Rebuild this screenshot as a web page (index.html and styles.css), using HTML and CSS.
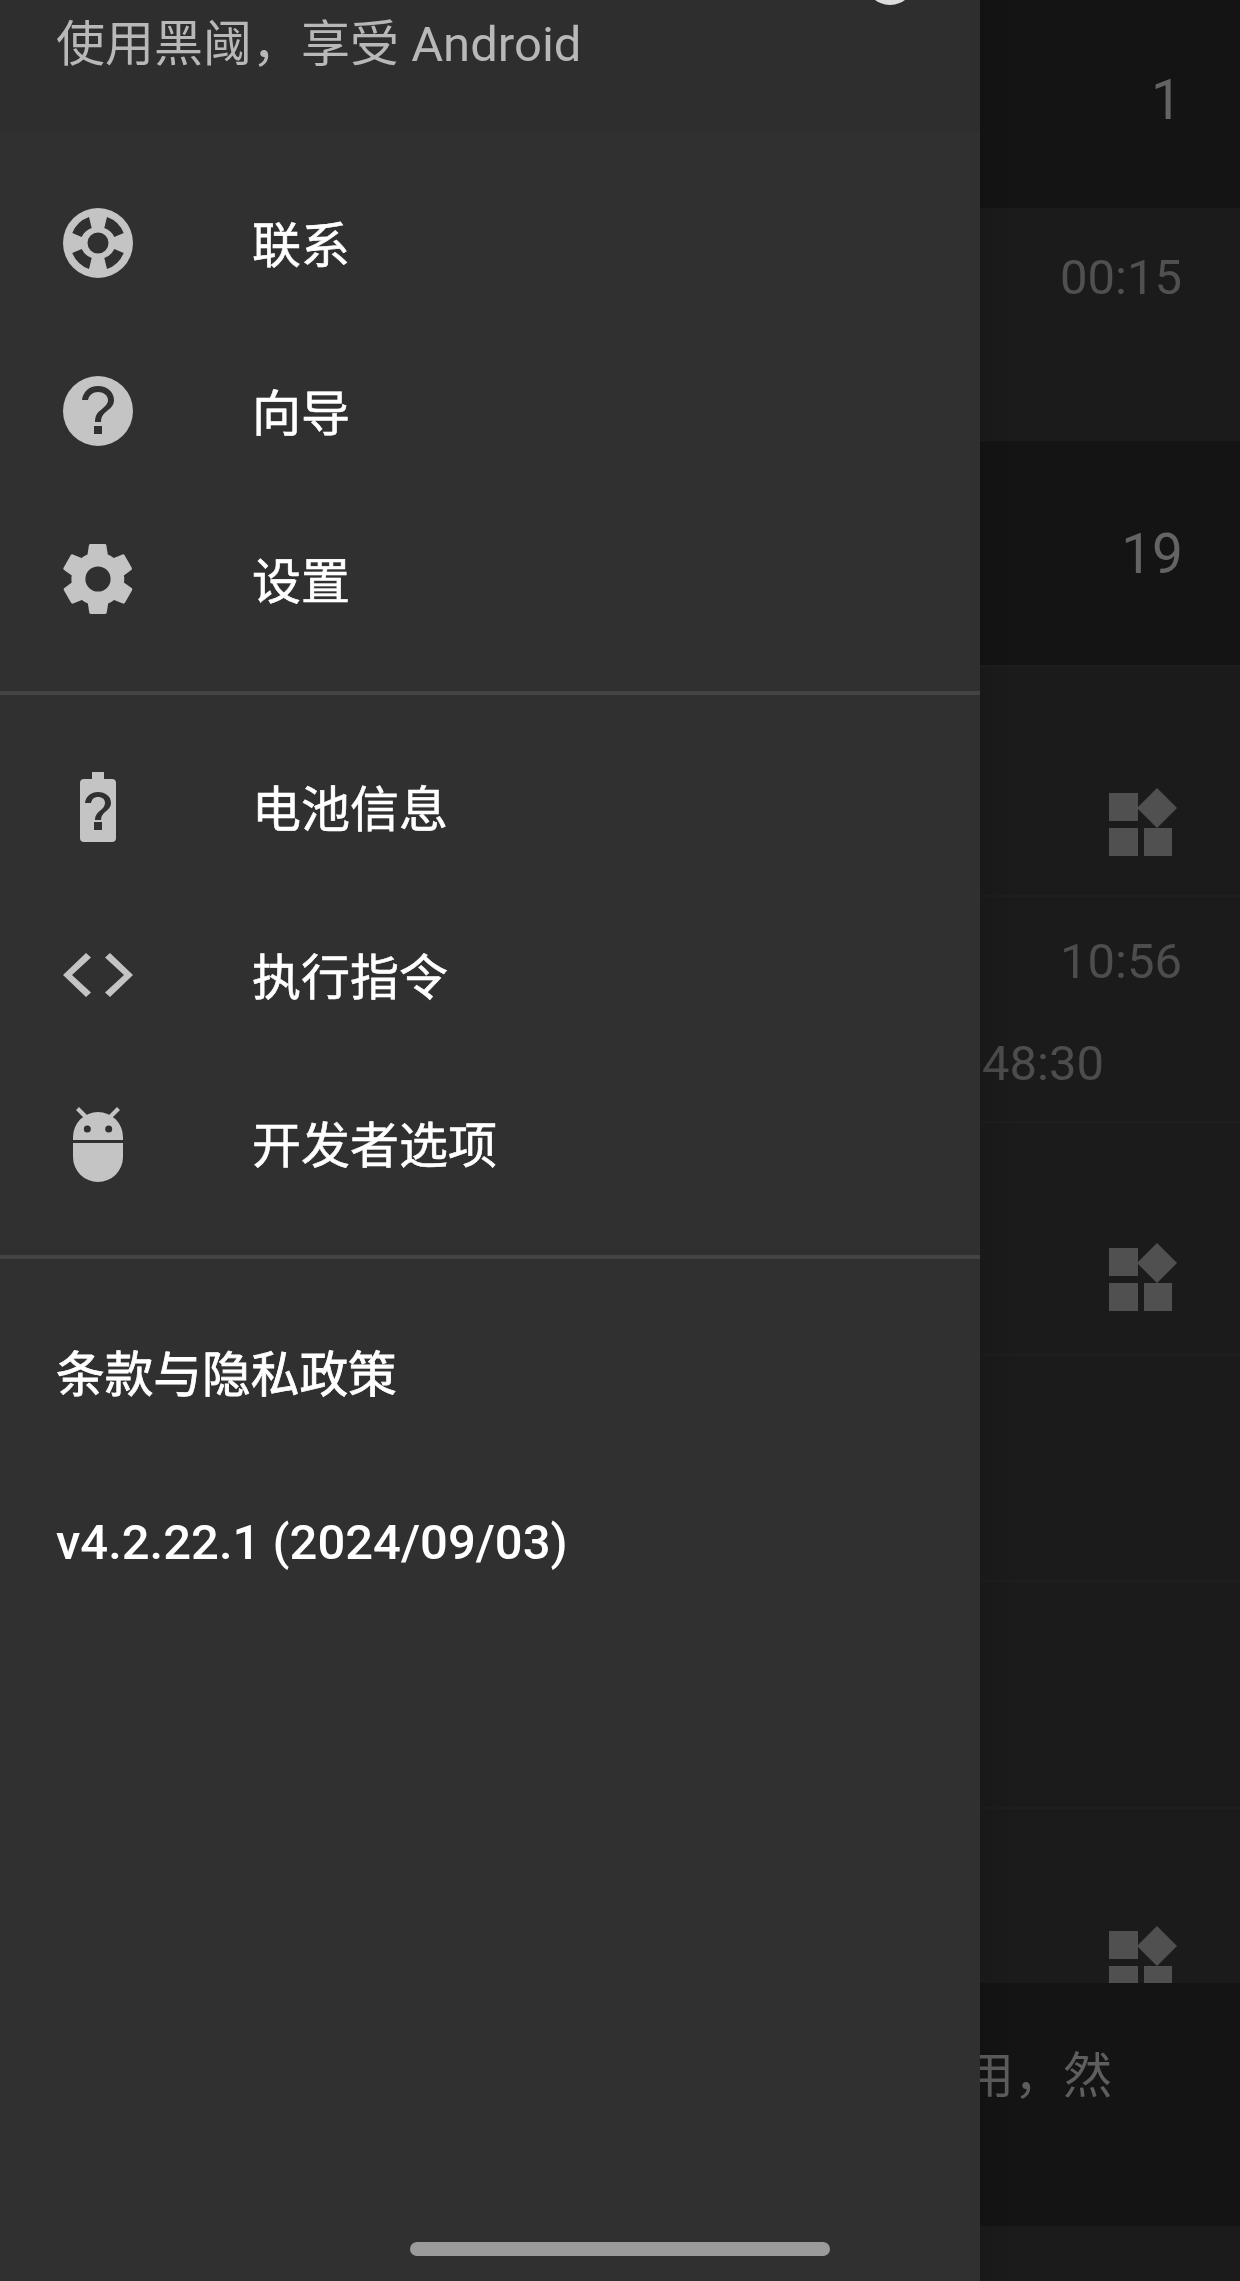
FILE: index.html
```html
<!DOCTYPE html>
<html lang="zh-CN">
<head>
<meta charset="utf-8">
<title>黑阈</title>
<link rel="stylesheet" href="styles.css">
</head>
<body>
<main class="list">
  <section class="row dark h208"><span class="value big offset-a">1</span></section>
  <section class="row h233"><span class="value offset-b">00:15</span></section>
  <section class="row dark h224"><span class="value big offset-c">19</span></section>
  <section class="row h230 line">
    <svg class="widgets w-a" viewBox="0 0 64 64"><path d="M0 0h29v28H0zM0 35h29v28H0zM35 35h28v28H35zM48 -5l20 20-20 20-20-20z"/></svg>
  </section>
  <section class="row h226 line stack">
    <span class="value">10:56</span>
    <span class="value shifted">48:30</span>
  </section>
  <section class="row h233 line">
    <svg class="widgets w-b" viewBox="0 0 64 64"><path d="M0 0h29v28H0zM0 35h29v28H0zM35 35h28v28H35zM48 -5l20 20-20 20-20-20z"/></svg>
  </section>
  <section class="row h226 line"></section>
  <section class="row h227 line"></section>
  <section class="row h176 clip">
    <svg class="widgets" viewBox="0 0 64 64"><path d="M0 0h29v28H0zM0 35h29v28H0zM35 35h28v28H35zM48 -5l20 20-20 20-20-20z"/></svg>
  </section>
  <section class="row dark h243 notice"><span class="notice-text">用，然</span></section>
  <section class="row h56"></section>
</main>

<aside class="drawer">
  <div class="avatar-edge"></div>
  <header class="drawer-head">使用黑阈，享受 Android</header>
  <nav class="group first">
    <a class="item">
      <svg class="icon" viewBox="0 0 70 70"><path fill-rule="evenodd" d="M35 0a35 35 0 1 1 0 70a35 35 0 1 1 0-70zM35 24.500a10.500 10.500 0 1 0 0 21a10.500 10.500 0 1 0 0-21zM26 9A28 28 0 0 0 9.300 25L18.700 29A17 17 0 0 1 28.700 20zM44 9A28 28 0 0 1 60.700 25L51.300 29A17 17 0 0 0 41.300 20zM26 61A28 28 0 0 1 9.300 45L18.700 41A17 17 0 0 0 28.700 50zM44 61A28 28 0 0 0 60.700 45L51.300 41A17 17 0 0 1 41.300 50z"/></svg>
      <span>联系</span>
    </a>
    <a class="item">
      <svg class="icon" viewBox="0 0 70 70"><path fill-rule="evenodd" d="M35 0a35 35 0 1 1 0 70a35 35 0 1 1 0-70zM31 50v8h8v-8zM35 10c-9 0-15 6-16 14h6c1-5 5-8 10-8s10 3 10 8c0 4-3 6-6 9-4 3-7 6-7 13h6c0-5 2-8 6-11 4-3 7-6 7-11 0-8-7-14-16-14z"/></svg>
      <span>向导</span>
    </a>
    <a class="item">
      <svg class="icon" viewBox="2 2 20 20"><path fill-rule="evenodd" d="M19.400 13c.1-.3.1-.7.1-1s0-.7-.1-1l2.100-1.600c.2-.2.3-.4.1-.7l-2-3.500c-.1-.2-.4-.3-.6-.2l-2.500 1c-.5-.4-1.100-.7-1.700-1l-.4-2.600c0-.2-.2-.4-.5-.4h-4c-.3 0-.5.2-.5.400l-.4 2.600c-.6.3-1.200.6-1.700 1l-2.500-1c-.2-.1-.5 0-.6.2l-2 3.500c-.2.3-.1.5.1.7L4.500 11c-.1.3-.1.7-.1 1s0 .7.1 1l-2.100 1.600c-.2.2-.3.4-.1.7l2 3.500c.1.2.4.3.6.2l2.500-1c.5.4 1.100.7 1.700 1l.4 2.600c0 .2.2.4.5.4h4c.3 0 .5-.2.5-.4l.4-2.600c.6-.3 1.200-.6 1.700-1l2.500 1c.2.1.5 0 .6-.2l2-3.500c.2-.3.1-.5-.1-.7zM12 8.400a3.600 3.600 0 1 1 0 7.200a3.600 3.600 0 1 1 0-7.200z"/></svg>
      <span>设置</span>
    </a>
  </nav>
  <hr class="rule">
  <nav class="group">
    <a class="item">
      <svg class="icon" viewBox="0 0 70 70"><path fill-rule="evenodd" d="M29 0h12v7h8a4 4 0 0 1 4 4v55a4 4 0 0 1-4 4H21a4 4 0 0 1-4-4V11a4 4 0 0 1 4-4h8zM31 50v8h8v-8zM35 20c-7 0-12 4-13 11h6c1-4 3-6 7-6s7 2 7 6c0 3-2 5-4 7-3 2-6 5-6 10h6c0-4 2-6 4-8 3-2 6-5 6-9 0-7-6-11-13-11z"/></svg>
      <span>电池信息</span>
    </a>
    <a class="item">
      <svg class="icon" viewBox="0 0 70 70"><path d="M23 13l5 4.500-19 17.500 19 17.500-5 4.500L0 35zM47 13l-5 4.500 19 17.500-19 17.500 5 4.500L70 35z"/></svg>
      <span>执行指令</span>
    </a>
    <a class="item">
      <svg class="icon" viewBox="0 0 70 70"><path fill-rule="evenodd" d="M10 32v-3a25 25 0 0 1 50 0v3zM24.300 17.500a3.500 3.500 0 1 0 0 7a3.500 3.500 0 1 0 0-7zM45.700 17.500a3.500 3.500 0 1 0 0 7a3.500 3.500 0 1 0 0-7z"/><path d="M10 35h50v14a25 25 0 0 1-50 0zM13 2l3-3 10 10-3 3zM57 2l-3-3-10 10 3 3z"/></svg>
      <span>开发者选项</span>
    </a>
  </nav>
  <hr class="rule">
  <nav class="group tail">
    <a class="item plain terms">条款与隐私政策</a>
    <a class="item plain version">v4.2.22.1 (2024/09/03)</a>
  </nav>
  <div class="home-bar"></div>
</aside>
</body>
</html>
```

FILE: styles.css
```css
* { box-sizing: border-box; }
html, body { margin: 0; padding: 0; }
body {
  width: 1240px;
  height: 2281px;
  position: relative;
  overflow: hidden;
  background: #1b1b1b;
  font-family: Roboto, "Noto Sans CJK SC", sans-serif;
}

/* dimmed list behind the drawer */
.list { display: flex; flex-direction: column; width: 100%; }
.row {
  display: flex;
  flex-direction: column;
  align-items: flex-end;
  justify-content: center;
  padding-right: 58px;
  background: #1b1b1b;
  color: #505050;
  font-size: 49px;
  line-height: 56px;
  overflow: hidden;
}
.dark { background: #141414; color: #646464; }
.line { border-top: 2px solid #1e1e1e; }
.h208 { height: 208px; }
.h233 { height: 233px; }
.h224 { height: 224px; }
.h230 { height: 230px; }
.h226 { height: 226px; }
.h227 { height: 227px; }
.h176 { height: 176px; justify-content: flex-start; border-top: 2px solid #1e1e1e; }
.h243 { height: 243px; }
.h56 { height: 56px; border-top: 0; }
.value { display: block; }
.big { font-size: 55px; }
.offset-a { margin-top: -8px; }
.offset-b { margin-bottom: 94px; }
.offset-c { margin: 0 -1px -2px 0; }
.stack { justify-content: flex-start; padding-top: 37px; color: #4d4d4d; gap: 46px; }
.shifted { margin-right: 78px; }
.widgets {
  display: block;
  width: 64px;
  height: 64px;
  overflow: visible;
  fill: #505050;
  margin-right: 9px;
}
.w-a { margin-top: 88px; }
.w-b { margin-top: 82px; }
.clip .widgets { margin-top: 122px; }
.notice { justify-content: flex-start; align-items: flex-start; padding: 66px 0 0 965px; }
.notice-text { white-space: nowrap; color: #5e5e5e; }

/* soft shadow the drawer casts */
.list::after {
  content: "";
  position: absolute;
  top: 0; bottom: 0; left: 980px;
  width: 40px;
  background: linear-gradient(to right, rgba(0,0,0,.09), rgba(0,0,0,0));
}

/* drawer */
.drawer {
  position: absolute;
  top: 0; left: 0; bottom: 0;
  width: 980px;
  background: #303030;
  display: flex;
  flex-direction: column;
  overflow: hidden;
}
.avatar-edge {
  position: absolute;
  left: 865px;
  top: -45px;
  width: 50px;
  height: 50px;
  border-radius: 50%;
  background: #dcdcdc;
}
.drawer-head {
  height: 132px;
  padding: 17px 0 0 56px;
  background: #2e2e2e;
  color: #b8b8b8;
  font-size: 49px;
  line-height: 56px;
}
.group { display: flex; flex-direction: column; }
.group.first { padding-top: 27px; }
.item {
  display: flex;
  align-items: center;
  height: 168px;
  padding-left: 63px;
  color: #fff;
  font-size: 49px;
  line-height: 56px;
  -webkit-text-stroke: .6px #fff;
}
.item span { margin: 8px 0 0 119px; }
.item.plain { padding-left: 56px; }
.terms { font-size: 48.7px; -webkit-text-stroke: .8px #fff; }
.version { font-weight: 500; padding-bottom: 3px; -webkit-text-stroke: 0; }
.icon { display: block; width: 70px; height: 70px; fill: #c4c4c4; flex: none; overflow: visible; }
.rule {
  margin: 28px 0 28px;
  height: 4px;
  border: 0;
  background: #444;
}
.group.tail { padding-top: 5px; }
.home-bar {
  position: absolute;
  left: 410px;
  top: 2242px;
  width: 420px;
  height: 14px;
  border-radius: 7px;
  background: #9b9b9b;
}
```
